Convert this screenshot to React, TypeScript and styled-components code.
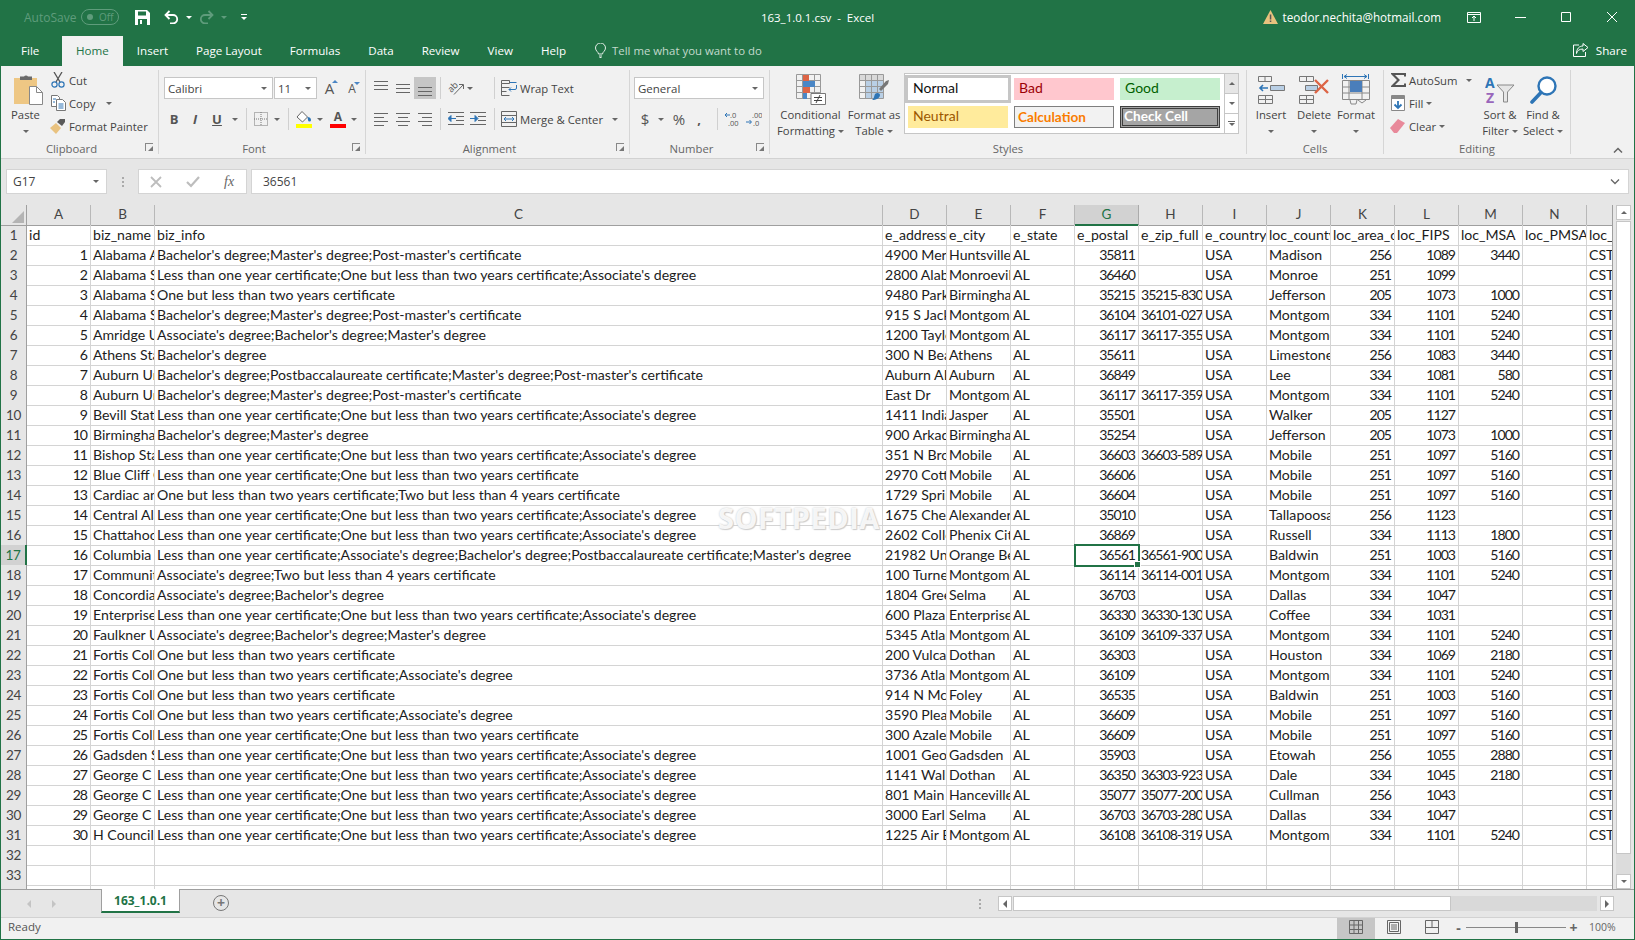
import React from 'react';
import styled, { createGlobalStyle } from 'styled-components';

const UI = '"Open Sans", "Noto Sans", sans-serif';
const CELL = 'Lato, "Open Sans", sans-serif';
const GREEN = '#217346';

const GlobalStyle = createGlobalStyle`
  html, body { margin: 0; padding: 0; overflow: hidden; background: #e6e6e6; }
  * { box-sizing: border-box; }
  svg { display: block; flex: none; }
`;

const L1 = "Less than one year certificate;One but less than two years certificate;Associate's degree";
const L2 = 'Less than one year certificate;One but less than two years certificate';
const O1 = 'One but less than two years certificate';
const O2 = "One but less than two years certificate;Associate's degree";
const B1 = "Bachelor's degree;Master's degree;Post-master's certificate";
const MG = 'Montgomery';

// id | name | info | address | city | postal | zip | county | area | fips | msa
const ROWS = [
  `1|Alabama A&M University|${B1}|4900 Meridian St|Huntsville|35811||Madison|256|1089|3440`,
  `2|Alabama Southern|${L1}|2800 Alabama Hwy|Monroeville|36460||Monroe|251|1099|`,
  `3|Alabama School|${O1}|9480 Parkway E|Birmingham|35215|35215-830|Jefferson|205|1073|1000`,
  `4|Alabama State University|${B1}|915 S Jackson|${MG}|36104|36101-027|${MG}|334|1101|5240`,
  `5|Amridge University|Associate's degree;Bachelor's degree;Master's degree|1200 Taylor Rd|${MG}|36117|36117-355|${MG}|334|1101|5240`,
  `6|Athens State|Bachelor's degree|300 N Beaty|Athens|35611||Limestone|256|1083|3440`,
  `7|Auburn University|Bachelor's degree;Postbaccalaureate certificate;Master's degree;Post-master's certificate|Auburn AL|Auburn|36849||Lee|334|1081|580`,
  `8|Auburn University|${B1}|East Dr|${MG}|36117|36117-359|${MG}|334|1101|5240`,
  `9|Bevill State|${L1}|1411 Indiana|Jasper|35501||Walker|205|1127|`,
  `10|Birmingham|Bachelor's degree;Master's degree|900 Arkadelphia|Birmingham|35254||Jefferson|205|1073|1000`,
  `11|Bishop State|${L1}|351 N Broad|Mobile|36603|36603-589|Mobile|251|1097|5160`,
  `12|Blue Cliff College|${L2}|2970 Cottage|Mobile|36606||Mobile|251|1097|5160`,
  `13|Cardiac and|One but less than two years certificate;Two but less than 4 years certificate|1729 Spring|Mobile|36604||Mobile|251|1097|5160`,
  `14|Central Alabama|${L1}|1675 Cherokee|Alexander City|35010||Tallapoosa|256|1123|`,
  `15|Chattahoochee|${L1}|2602 College|Phenix City|36869||Russell|334|1113|1800`,
  `16|Columbia Southern|Less than one year certificate;Associate's degree;Bachelor's degree;Postbaccalaureate certificate;Master's degree|21982 University|Orange Beach|36561|36561-900|Baldwin|251|1003|5160`,
  `17|Community College|Associate's degree;Two but less than 4 years certificate|100 Turner|${MG}|36114|36114-001|${MG}|334|1101|5240`,
  `18|Concordia College|Associate's degree;Bachelor's degree|1804 Green|Selma|36703||Dallas|334|1047|`,
  `19|Enterprise State|${L1}|600 Plaza Dr|Enterprise|36330|36330-130|Coffee|334|1031|`,
  `20|Faulkner University|Associate's degree;Bachelor's degree;Master's degree|5345 Atlanta|${MG}|36109|36109-337|${MG}|334|1101|5240`,
  `21|Fortis College|${O1}|200 Vulcan|Dothan|36303||Houston|334|1069|2180`,
  `22|Fortis College|${O2}|3736 Atlanta|${MG}|36109||${MG}|334|1101|5240`,
  `23|Fortis College|${O1}|914 N McKenzie|Foley|36535||Baldwin|251|1003|5160`,
  `24|Fortis College|${O2}|3590 Pleasant|Mobile|36609||Mobile|251|1097|5160`,
  `25|Fortis College|${L2}|300 Azalea|Mobile|36609||Mobile|251|1097|5160`,
  `26|Gadsden State|${L1}|1001 George|Gadsden|35903||Etowah|256|1055|2880`,
  `27|George C Wallace|${L1}|1141 Wallace|Dothan|36350|36303-923|Dale|334|1045|2180`,
  `28|George C Wallace|${L1}|801 Main St|Hanceville|35077|35077-200|Cullman|256|1043|`,
  `29|George C Wallace|${L1}|3000 Earl Goodwin|Selma|36703|36703-280|Dallas|334|1047|`,
  `30|H Councill Trenholm|${L1}|1225 Air Base|${MG}|36108|36108-319|${MG}|334|1101|5240`,
].map((r) => r.split('|'));

const LETTERS = 'ABCDEFGHIJKLMNO'.split('');
const HEADERS = ['id', 'biz_name', 'biz_info', 'e_address', 'e_city', 'e_state', 'e_postal', 'e_zip_full', 'e_country', 'loc_county', 'loc_area_code', 'loc_FIPS', 'loc_MSA', 'loc_PMSA', 'loc_timezone'];
const COLUMNS = '26px 64px 64px 728px repeat(12, 64px)';

/* window chrome */
const App1 = styled.div`
  width: 1635px;
  height: 940px;
  display: flex;
  flex-direction: column;
  border: solid ${GREEN};
  border-width: 0 1px 1px 1px;
  background: #e6e6e6;
  overflow: hidden;
  font-family: ${UI};
`;
const TitleBar = styled.div`
  height: 36px;
  margin: 0 -1px;
  padding-bottom: 2px;
  background: ${GREEN};
  color: #fff;
  display: grid;
  grid-template-columns: 1fr auto 1fr;
  align-items: center;
`;
const Qat = styled.div`
  display: flex;
  align-items: center;
  padding-left: 24px;
`;
const AutoSave = styled.span`
  color: #5f9c7c;
  font-size: 12px;
  width: 57px;
`;
const Toggle = styled.span`
  width: 38px;
  height: 16px;
  border: 1px solid #5f9c7c;
  border-radius: 8px;
  color: #5f9c7c;
  font-size: 10px;
  display: flex;
  align-items: center;
  gap: 6px;
  padding-left: 5px;
  margin-right: 16px;
  &::before {
    content: '';
    width: 6px;
    height: 6px;
    border-radius: 50%;
    background: #5f9c7c;
  }
`;
const QatSlot = styled.span<{ $w: number; $ml?: number }>`
  width: ${(p) => p.$w}px;
  margin-left: ${(p) => p.$ml ?? 0}px;
  display: flex;
  flex-direction: column;
  align-items: center;
  gap: 2px;
`;
const QatCaret = styled.i<{ $dim?: boolean }>`
  border-left: 3px solid transparent;
  border-right: 3px solid transparent;
  border-top: 3px solid ${(p) => (p.$dim ? '#5f9c7c' : '#fff')};
`;
const QatBar = styled.i`
  width: 6px;
  height: 1px;
  background: #fff;
`;
const WinTitle = styled.div`
  font-size: 11.5px;
  white-space: pre;
`;
const Account = styled.div`
  display: flex;
  align-items: center;
  justify-content: flex-end;
`;
const Email = styled.span`
  font-size: 11.7px;
  margin: 0 26px 0 5px;
`;
const WinBtn = styled.span<{ $w: number; $ml?: number }>`
  width: ${(p) => p.$w}px;
  margin-left: ${(p) => p.$ml ?? 0}px;
  display: flex;
  justify-content: center;
`;
const TabStrip = styled.div`
  height: 30px;
  margin: 0 -1px;
  background: ${GREEN};
  display: flex;
  align-items: stretch;
`;
const Tab = styled.div<{ $active?: boolean }>`
  padding: 0 14px 2px;
  font-size: 11.6px;
  display: flex;
  align-items: center;
  color: ${(p) => (p.$active ? GREEN : '#fff')};
  background: ${(p) => (p.$active ? '#f1f1f1' : 'transparent')};
`;
const FileTab = styled(Tab)`
  width: 62px;
  padding: 0 0 2px 21px;
`;
const TellMe = styled.div`
  margin-left: 15px;
  padding-bottom: 2px;
  display: flex;
  align-items: center;
  gap: 6px;
  font-size: 11.4px;
  color: #c3dacd;
`;
const Share = styled.div`
  margin-left: auto;
  margin-right: 8px;
  padding-bottom: 2px;
  display: flex;
  align-items: center;
  gap: 7px;
  font-size: 11.6px;
  color: #fff;
`;

/* ribbon */
const Ribbon = styled.div`
  height: 93px;
  background: #f1f1f1;
  border-bottom: 1px solid #d2d2d2;
  display: flex;
  color: #444;
  font-size: 11.3px;
`;
const Group = styled.div<{ $w: number }>`
  position: relative;
  width: ${(p) => p.$w}px;
  flex: none;
  margin-top: 4px;
  height: 84px;
  display: flex;
  flex-direction: column;
  border-right: 1px solid #d6d6d6;
`;
const GroupBody = styled.div`
  flex: 1;
  display: flex;
  min-height: 0;
`;
const GroupName = styled.div<{ $launcher?: boolean }>`
  height: 10px;
  line-height: 10px;
  text-align: center;
  padding-right: ${(p) => (p.$launcher ? 16 : 0)}px;
  color: #666;
`;
const Launcher = styled.span`
  position: absolute;
  right: 5px;
  bottom: 3px;
  width: 8px;
  height: 8px;
  border: solid #888;
  border-width: 1px 0 0 1px;
  &::after {
    content: '';
    position: absolute;
    right: 0;
    bottom: 0;
    border-left: 5px solid transparent;
    border-bottom: 5px solid #777;
  }
`;
const Big = styled.div<{ $w: number; $ml?: number }>`
  width: ${(p) => p.$w}px;
  margin-left: ${(p) => p.$ml ?? 0}px;
  flex: none;
  padding-top: 4px;
  display: flex;
  flex-direction: column;
  align-items: center;
  line-height: 16px;
  white-space: nowrap;
`;
const BigIcon = styled.div`
  height: 31px;
  flex: none;
  display: flex;
  align-items: center;
  justify-content: center;
  margin-bottom: 2px;
`;
const PasteSlot = styled(BigIcon)`
  padding-left: 5px;
`;
const BigLine = styled.div`
  height: 16px;
  flex: none;
  display: flex;
  align-items: center;
  gap: 3px;
`;
const SmallCol = styled.div<{ $w: number; $pl?: number }>`
  width: ${(p) => p.$w}px;
  flex: none;
  padding-left: ${(p) => p.$pl ?? 0}px;
  display: flex;
  flex-direction: column;
  gap: 3px;
`;
const SmallRow = styled.div`
  height: 20px;
  display: flex;
  align-items: center;
  white-space: nowrap;
`;
const SmallIcon = styled.span`
  width: 16px;
  margin-right: 3px;
  display: flex;
  justify-content: center;
`;
const ToolRows = styled.div<{ $pl: number }>`
  padding: 7px 0 0 ${(p) => p.$pl}px;
  display: flex;
  flex-direction: column;
  gap: 9px;
`;
const ToolRow = styled.div`
  height: 22px;
  display: flex;
  align-items: center;
`;
const Tool = styled.span<{ $w: number; $on?: boolean; $ml?: number }>`
  width: ${(p) => p.$w}px;
  height: 22px;
  margin-left: ${(p) => p.$ml ?? 0}px;
  flex: none;
  display: flex;
  align-items: center;
  justify-content: center;
  background: ${(p) => (p.$on ? '#c6c6c6' : 'transparent')};
`;
const Sep = styled.span<{ $l: number; $r: number }>`
  width: 1px;
  height: 22px;
  flex: none;
  background: #d0d0d0;
  margin: 0 ${(p) => p.$r}px 0 ${(p) => p.$l}px;
`;
const Caret = styled.i<{ $ml?: number }>`
  display: inline-block;
  flex: none;
  margin-left: ${(p) => p.$ml ?? 0}px;
  border-left: 3.5px solid transparent;
  border-right: 3.5px solid transparent;
  border-top: 3.5px solid #666;
`;
const Combo = styled.div<{ $w: number; $ml?: number }>`
  width: ${(p) => p.$w}px;
  height: 22px;
  margin-left: ${(p) => p.$ml ?? 0}px;
  flex: none;
  background: #fff;
  border: 1px solid #c6c6c6;
  padding: 0 5px 0 3px;
  display: flex;
  align-items: center;
  justify-content: space-between;
  font-size: 11.5px;
`;
const Letter = styled.span<{ $bold?: boolean; $italic?: boolean; $under?: boolean; $size?: number }>`
  font-family: ${UI};
  font-size: ${(p) => p.$size ?? 13}px;
  font-weight: ${(p) => (p.$bold ? 700 : 400)};
  font-style: ${(p) => (p.$italic ? 'italic' : 'normal')};
  text-decoration: ${(p) => (p.$under ? 'underline' : 'none')};
  color: #555;
`;
const GrowLetter = styled(Letter)`
  position: relative;
  &::after {
    content: '';
    position: absolute;
    right: -4px;
    top: 2px;
    border-left: 3px solid transparent;
    border-right: 3px solid transparent;
  }
`;
const GrowUp = styled(GrowLetter)`
  &::after { border-bottom: 3px solid #4a86c5; }
`;
const GrowDown = styled(GrowLetter)`
  &::after { border-top: 3px solid #4a86c5; }
`;
const ColorStack = styled.span`
  display: flex;
  flex-direction: column;
  align-items: center;
  line-height: 14px;
`;
const Swatch = styled.span<{ $c: string }>`
  width: 16px;
  height: 4px;
  background: ${(p) => p.$c};
`;
const ToolText = styled.span<{ $ml: number }>`
  margin-left: ${(p) => p.$ml}px;
  white-space: nowrap;
`;
const Gallery = styled.div`
  width: 335px;
  height: 61px;
  margin-top: 3px;
  flex: none;
  background: #fff;
  border: 1px solid #c6c6c6;
  display: flex;
`;
const StyleGrid = styled.div`
  padding: 4px 0 0 3px;
  display: grid;
  grid-template-columns: repeat(3, 100px);
  grid-auto-rows: 22px;
  gap: 6px;
`;
const StyleCell = styled.div<{ $bg: string; $fg: string; $border?: string; $bold?: boolean }>`
  background: ${(p) => p.$bg};
  color: ${(p) => p.$fg};
  border: ${(p) => p.$border ?? 'none'};
  font-family: ${CELL};
  font-size: ${(p) => (p.$bold ? 13.6 : 14)}px;
  font-weight: ${(p) => (p.$bold ? 700 : 400)};
  padding-left: ${(p) => (p.$border ? 3 : 5)}px;
  line-height: 20px;
  white-space: nowrap;
`;
const NormalCell = styled(StyleCell)`
  box-shadow: 0 0 0 3px #c6c6c6;
`;
const CheckCell = styled(StyleCell)`
  border: 3px double #3f3f3f;
  padding-left: 1px;
  line-height: 15px;
`;
const GalleryScroll = styled.div`
  margin-left: auto;
  width: 14px;
  display: flex;
  flex-direction: column;
  border-left: 1px solid #c6c6c6;
`;
const GalleryBtn = styled.span<{ $off?: boolean }>`
  flex: 1;
  background: ${(p) => (p.$off ? '#e6e6e6' : '#fff')};
  border-bottom: 1px solid #c6c6c6;
  display: flex;
  flex-direction: column;
  align-items: center;
  justify-content: center;
  gap: 1px;
  &:last-child { border-bottom: none; }
`;
const MoreBar = styled.span`
  width: 7px;
  height: 1px;
  background: #666;
`;
const UpCaret = styled(Caret)`
  transform: rotate(180deg);
`;
const Collapse = styled.div`
  margin-left: auto;
  padding: 81px 11px 0 0;
`;

/* formula bar */
const FormulaBand = styled.div`
  height: 46px;
  padding: 10px 5px 0 5px;
  display: flex;
  flex: none;
`;
const Field = styled.div<{ $w?: number }>`
  height: 25px;
  background: #fff;
  border: 1px solid #d4d4d4;
  display: flex;
  align-items: center;
  font-size: 12px;
  color: #444;
  flex: ${(p) => (p.$w ? `0 0 ${p.$w}px` : 1)};
`;
const NameBox = styled(Field)`
  padding: 0 7px 0 6px;
  justify-content: space-between;
`;
const Dots = styled.div`
  width: 31px;
  display: flex;
  flex-direction: column;
  align-items: center;
  justify-content: center;
  gap: 2px;
  height: 25px;
  &::before, &::after, span {
    content: '';
    width: 2px;
    height: 2px;
    background: #aaa;
  }
`;
const FxBox = styled(Field)`
  padding-left: 11px;
  gap: 24px;
  margin-right: 4px;
`;
const FormulaInput = styled(Field)`
  padding: 0 8px 0 11px;
  justify-content: space-between;
`;
const FxLabel = styled.span`
  font-family: "Liberation Serif", serif;
  font-style: italic;
  font-size: 14px;
  color: #666;
`;

/* worksheet */
const SheetArea = styled.div`
  height: 684px;
  flex: none;
  display: flex;
  position: relative;
`;
const Grid = styled.div`
  width: 1612px;
  flex: none;
  overflow: hidden;
  background: #fff;
  border-right: 1px solid #9f9f9f;
`;
const GridRow = styled.div<{ $h?: number }>`
  display: grid;
  grid-template-columns: ${COLUMNS};
  height: ${(p) => p.$h ?? 20}px;
`;
const Corner = styled.div`
  background: #e6e6e6;
  border: solid #9f9f9f;
  border-width: 0 1px 1px 0;
  position: relative;
  &::after {
    content: '';
    position: absolute;
    right: 2px;
    bottom: 2px;
    border-left: 12px solid transparent;
    border-bottom: 12px solid #b4b4b4;
  }
`;
const ColHead = styled.div<{ $sel?: boolean }>`
  background: ${(p) => (p.$sel ? '#d2d2d2' : '#e6e6e6')};
  color: ${(p) => (p.$sel ? GREEN : '#444')};
  border-right: 1px solid ${(p) => (p.$sel ? '#ababab' : '#b8b8b8')};
  border-bottom: ${(p) => (p.$sel ? `2px solid ${GREEN}` : '1px solid #9f9f9f')};
  font-family: ${CELL};
  font-size: 13.5px;
  text-align: center;
  line-height: 19px;
`;
const RowHead = styled.div<{ $sel?: boolean }>`
  background: ${(p) => (p.$sel ? '#d2d2d2' : '#e6e6e6')};
  color: ${(p) => (p.$sel ? GREEN : '#444')};
  border-right: ${(p) => (p.$sel ? `2px solid ${GREEN}` : '1px solid #9f9f9f')};
  border-bottom: 1px solid #c8c8c8;
  font-family: ${CELL};
  font-size: 13.5px;
  letter-spacing: -0.4px;
  text-align: center;
  line-height: 20px;
`;
const Cell = styled.div<{ $num?: boolean; $active?: boolean; $digits?: boolean }>`
  position: relative;
  border: solid #d4d4d4;
  border-width: 0 1px 1px 0;
  padding: 0 3px 0 2px;
  font-family: ${CELL};
  font-size: 14.1px;
  letter-spacing: ${(p) => (p.$digits ? '-1px' : 'normal')};
  line-height: 20px;
  color: #1c1c1c;
  white-space: nowrap;
  overflow: ${(p) => (p.$active ? 'visible' : 'hidden')};
  text-align: ${(p) => (p.$num ? 'right' : 'left')};
  ${(p) =>
    p.$active &&
    `
    outline: 2px solid ${GREEN};
    outline-offset: -1px;
    z-index: 2;
    &::after {
      content: '';
      position: absolute;
      right: -3px;
      bottom: -3px;
      width: 5px;
      height: 5px;
      background: ${GREEN};
      border: 1px solid #fff;
    }
  `}
`;
const Watermark = styled.div`
  position: absolute;
  left: 717px;
  top: 293px;
  font: 700 29px ${UI};
  letter-spacing: 0.5px;
  color: rgba(255, 255, 255, 0.85);
  text-shadow: 0 0 2px #c4c4c4, 1px 1px 1px #d0d0d0;
  pointer-events: none;
  z-index: 1;
`;
const VScroll = styled.div`
  flex: 1;
  padding: 0 3px 0 3px;
  display: flex;
  flex-direction: column;
`;
const ScrollBtn = styled.div`
  height: 15px;
  flex: none;
  background: #fff;
  border: 1px solid #c6c6c6;
  display: flex;
  align-items: center;
  justify-content: center;
`;
const VThumb = styled.div`
  height: 633px;
  flex: none;
  background: #fff;
  border: 1px solid #c6c6c6;
  margin-top: 1px;
`;
const VTrack = styled.div`
  flex: 1;
  background: #dcdcdc;
`;

/* sheet tabs + status */
const TabBar = styled.div`
  height: 28px;
  flex: none;
  border-top: 1px solid #9f9f9f;
  display: flex;
  align-items: flex-start;
`;
const SheetNav = styled.div`
  width: 100px;
  height: 27px;
  display: flex;
  align-items: center;
  padding-left: 26px;
  gap: 21px;
`;
const NavArrow = styled.i<{ $left?: boolean }>`
  border-top: 4px solid transparent;
  border-bottom: 4px solid transparent;
  ${(p) => (p.$left ? 'border-right: 4px solid #c4c4c4;' : 'border-left: 4px solid #c4c4c4;')}
`;
const SheetTab = styled.div`
  width: 79px;
  height: 24px;
  background: #fff;
  border: solid #9f9f9f;
  border-width: 0 1px;
  border-bottom: 2px solid ${GREEN};
  margin-top: -1px;
  color: ${GREEN};
  font-weight: 700;
  font-size: 12px;
  text-align: center;
  line-height: 24px;
`;
const AddSheet = styled.div`
  margin: 5px 0 0 33px;
  width: 16px;
  height: 16px;
  border: 1.5px solid #777;
  border-radius: 50%;
  display: flex;
  align-items: center;
  justify-content: center;
  color: #777;
  font-size: 14px;
  line-height: 1;
  &::before { content: '+'; font-weight: 700; }
`;
const Splitter = styled(Dots)`
  width: 14px;
  height: 27px;
  margin-left: 744px;
`;
const HScroll = styled.div`
  flex: 1;
  display: flex;
  margin: 6px 20px 0 11px;
  height: 15px;
`;
const HBtn = styled.div`
  width: 14px;
  background: #fff;
  border: 1px solid #c6c6c6;
  display: flex;
  align-items: center;
  justify-content: center;
`;
const HThumb = styled.div`
  width: 438px;
  background: #fff;
  border: 1px solid #c6c6c6;
  margin-left: 1px;
`;
const HTrack = styled.div`
  flex: 1;
  background: #d9d9d9;
  margin-right: 3px;
`;
const DarkArrow = styled.i<{ $left?: boolean }>`
  border-top: 4px solid transparent;
  border-bottom: 4px solid transparent;
  ${(p) => (p.$left ? 'border-right: 4px solid #666;' : 'border-left: 4px solid #666;')}
`;
const StatusBar = styled.div`
  height: 22px;
  flex: none;
  background: #f1f1f1;
  border-top: 1px solid #d2d2d2;
  display: flex;
  align-items: stretch;
  padding-left: 7px;
  font-size: 11.5px;
  color: #555;
`;
const Ready = styled.span`
  line-height: 17px;
`;
const ViewBtn = styled.span<{ $on?: boolean }>`
  width: 38px;
  height: 21px;
  padding-bottom: 3px;
  display: flex;
  align-items: center;
  justify-content: center;
  background: ${(p) => (p.$on ? '#c6c6c6' : 'transparent')};
`;
const Views = styled.div`
  margin-left: auto;
  display: flex;
`;
const Zoomer = styled.div`
  display: flex;
  align-items: center;
  padding-bottom: 3px;
  margin: 0 19px 0 3px;
  gap: 3px;
`;
const ZoomSign = styled.span`
  font-weight: 700;
  font-size: 14px;
  width: 9px;
  text-align: center;
  color: #666;
`;
const Slider = styled.span`
  width: 100px;
  height: 1px;
  background: #888;
  position: relative;
  &::after {
    content: '';
    position: absolute;
    left: 49px;
    top: -5px;
    width: 3px;
    height: 11px;
    background: #666;
  }
`;
const Percent = styled.span`
  width: 26px;
  margin-left: 8px;
  font-size: 10.5px;
  color: #666;
`;

/* icons */
const AlignIcon = ({ y }: { y: number }) => (
  <svg width="14" height="16" viewBox="0 0 14 16" stroke="#666" strokeWidth="1">
    {[0, 1, 2].map((i) => <path key={i} d={`M0 ${y + i * 4 + 0.5}h14`} />)}
  </svg>
);
const HAlignIcon = ({ mode }: { mode: 'l' | 'c' | 'r' }) => {
  const widths = [14, 10, 14, 10];
  return (
    <svg width="14" height="14" viewBox="0 0 14 14" stroke="#666">
      {widths.map((w, i) => {
        const x = mode === 'l' ? 0 : mode === 'c' ? (14 - w) / 2 : 14 - w;
        return <path key={i} d={`M${x} ${i * 4 + 1.5}h${w}`} />;
      })}
    </svg>
  );
};
const IndentIcon = ({ flip }: { flip?: boolean }) => (
  <svg width="16" height="14" viewBox="0 0 16 14" fill="none">
    <path d="M0 .5h16M8 4.5h8M8 8.5h8M0 12.5h16" stroke="#666" />
    {flip ? (
      <path d="M0 6.5h5M5 3.5l3 3-3 3z" stroke="#2e75b6" fill="#2e75b6" />
    ) : (
      <path d="M3 6.5h5M3 3.5l-3 3 3 3z" stroke="#2e75b6" fill="#2e75b6" />
    )}
  </svg>
);

const Icons = {
  Save: () => (
    <svg width="15" height="15" viewBox="0 0 15 15">
      <path d="M0 0h12l3 3v12H0z" fill="#fff" />
      <path d="M3 1.5h8v4H3zM3 9h9v6H3z" fill={GREEN} />
      <path d="M5 10h2v4H5z" fill="#fff" />
    </svg>
  ),
  Undo: ({ c = '#fff' }: { c?: string }) => (
    <svg width="15" height="14" viewBox="0 0 15 14" fill="none" stroke={c} strokeWidth="1.8">
      <path d="M5.5 1L1.5 5l4 4M1.5 5H9a4.2 4.2 0 0 1 0 8.4H6" />
    </svg>
  ),
  Redo: () => (
    <svg width="15" height="14" viewBox="0 0 15 14" fill="none" stroke="#5f9c7c" strokeWidth="1.8">
      <path d="M9.5 1l4 4-4 4M13.5 5H6a4.2 4.2 0 0 0 0 8.4h3" />
    </svg>
  ),
  Warn: () => (
    <svg width="15" height="14" viewBox="0 0 15 14">
      <path d="M7.5 0L15 14H0z" fill="#e8c27e" />
      <path d="M6.8 4.5h1.5v5H6.8zM6.8 10.5h1.5v1.6H6.8z" fill="#555" />
    </svg>
  ),
  Display: () => (
    <svg width="14" height="11" viewBox="0 0 14 11" fill="none" stroke="#fff">
      <path d="M.5.5h13v10H.5zM.5 2.5h13M7 9V4.5M5 6l2-2 2 2" />
    </svg>
  ),
  Min: () => (
    <svg width="11" height="10" viewBox="0 0 11 10" stroke="#fff"><path d="M0 5.5h11" /></svg>
  ),
  Max: () => (
    <svg width="10" height="10" viewBox="0 0 10 10" fill="none" stroke="#fff"><path d="M.5.5h9v9h-9z" /></svg>
  ),
  Close: () => (
    <svg width="10" height="10" viewBox="0 0 10 10" stroke="#fff"><path d="M0 0l10 10M10 0L0 10" /></svg>
  ),
  Bulb: () => (
    <svg width="11" height="15" viewBox="0 0 11 15" fill="none" stroke="#e4eee8">
      <path d="M3.5 11c0-2-3-3-3-6a5 5 0 0 1 10 0c0 3-3 4-3 6zM4 13h3M4.5 14.5h2" />
    </svg>
  ),
  Share: () => (
    <svg width="16" height="14" viewBox="0 0 16 14" fill="none" stroke="#fff">
      <path d="M10 .5l5 4-5 4V6C6 6 4 8 3.5 10.5 3.5 6 6 3 10 3zM6 2H.5v11.5h12V9" />
    </svg>
  ),
  Paste: () => (
    <svg width="29" height="31" viewBox="0 0 29 31">
      <path d="M0 4h23v26H0z" fill="#eec784" />
      <path d="M6 2.5h4a2.5 2.5 0 0 1 4 0h4V6H6z" fill="#6b6b6b" />
      <path d="M15.5 12.5h7l6 6v12h-13z" fill="#fff" stroke="#888" />
      <path d="M22.5 12.5v6h6" fill="none" stroke="#888" />
    </svg>
  ),
  Cut: () => (
    <svg width="14" height="16" viewBox="0 0 14 16" fill="none">
      <path d="M3 0l6 10M11 0L5 10" stroke="#555" strokeWidth="1.3" />
      <circle cx="3.5" cy="12.5" r="2.6" stroke="#2e75b6" strokeWidth="1.2" />
      <circle cx="10.5" cy="12.5" r="2.6" stroke="#2e75b6" strokeWidth="1.2" />
    </svg>
  ),
  Copy: () => (
    <svg width="15" height="16" viewBox="0 0 15 16" fill="#fff">
      <path d="M.5.5h6l2 2v9H.5z" stroke="#777" />
      <path d="M5.5 4.5h6l3 3v8h-9z" stroke="#777" />
      <path d="M2 4h3M2 7h2M7.5 9h5M7.5 11h5M7.5 13h5" stroke="#2e75b6" fill="none" />
    </svg>
  ),
  Painter: () => (
    <svg width="16" height="16" viewBox="0 0 16 16">
      <path d="M0 10l6-5 5 5-5 6z" fill="#e9c27f" />
      <path d="M7 4l3-3 5 0 0 3-3 4z" fill="#5a5a5a" />
    </svg>
  ),
  Borders: () => (
    <svg width="14" height="14" viewBox="0 0 14 14" fill="none" stroke="#777" strokeDasharray="1 1">
      <path d="M.5.5h13v13H.5zM7 0v14M0 7h14" />
    </svg>
  ),
  Bucket: () => (
    <svg width="16" height="13" viewBox="0 0 16 13" fill="#fff" stroke="#666">
      <path d="M6 .5l5.5 5.5-5 5L1 6z" />
      <path d="M11.5 6c2 0 3.5 1 3.5 3a1.5 1.5 0 0 1-3 0z" fill="#2e75b6" stroke="none" />
    </svg>
  ),
  Orient: () => (
    <svg width="16" height="16" viewBox="0 0 16 16" fill="none">
      <text x="0" y="11" fontSize="9" fontFamily="Open Sans" fill="#555" transform="rotate(-45 4 8)">ab</text>
      <path d="M6 14.5L15 5M11 4.5h4.5v4.5" stroke="#666" />
    </svg>
  ),
  Wrap: () => (
    <svg width="16" height="16" viewBox="0 0 16 16" fill="none" stroke="#666">
      <path d="M.5.5h8v3h-8zM.5 3.5v12h8M.5 7.5h8M.5 11.5h5" />
      <path d="M9 2.5h6.5M15.5 5v3a1.5 1.5 0 0 1-1.5 1.5H8M10 7.5l-2 2 2 2" stroke="#2e75b6" />
    </svg>
  ),
  Merge: () => (
    <svg width="16" height="16" viewBox="0 0 16 16" fill="none" stroke="#666">
      <path d="M.5.5h15v15H.5zM.5 4.5h15M.5 11.5h15" />
      <path d="M3 8h10M5 6L3 8l2 2M11 6l2 2-2 2" stroke="#2e75b6" />
    </svg>
  ),
  IncDec: ({ dec }: { dec?: boolean }) => (
    <svg width="16" height="16" viewBox="0 0 16 16">
      <text x="6" y="6.5" fontSize="7.5" fontFamily="Open Sans" fill="#555">{dec ? '.00' : '.0'}</text>
      <text x={dec ? 7 : 4} y="14.5" fontSize="7.5" fontFamily="Open Sans" fill="#555">{dec ? '.0' : '.00'}</text>
      <path d={dec ? 'M0 11h5M3.5 9l2 2-2 2' : 'M1 4h5M3 2L1 4l2 2'} stroke="#2e75b6" fill="none" />
    </svg>
  ),
  CondFormat: () => (
    <svg width="30" height="31" viewBox="0 0 30 31" fill="none">
      <path d="M.5.5h24v24H.5zM.5 6.5h24M.5 12.5h24M.5 18.5h24M6.5 0v25M18.5 0v25" stroke="#999" />
      <path d="M7 1h6v6H7zM7 13h7v6H7z" fill="#dd6445" />
      <path d="M7 7h12v6H7zM7 19h4v6H7z" fill="#4a86c5" />
      <path d="M15 19.5h14.5v11H15z" fill="#fff" stroke="#777" />
      <path d="M18 23.5h8M18 26.5h8M20 29l4-8" stroke="#444" />
    </svg>
  ),
  TableFormat: () => (
    <svg width="30" height="31" viewBox="0 0 30 31" fill="none">
      <path d="M.5.5h24v24H.5z" stroke="#999" />
      <path d="M1 1h23v5H1z" fill="#d9d9d9" />
      <path d="M7 7h17v17H7z" fill="#b9cfe5" />
      <path d="M.5 6.5h24M.5 12.5h24M.5 18.5h24M6.5 0v25M12.5 0v25M18.5 0v25" stroke="#999" />
      <path d="M20 15l7-8 3-1-1 4-7 7z" fill="#777" />
      <path d="M16 20c2-2 5-1 5 1 0 3-4 5-8 5 2-1 2-4 3-6z" fill="#2e75b6" />
    </svg>
  ),
  Insert: () => (
    <svg width="27" height="28" viewBox="0 0 27 28" fill="none">
      <path d="M.5.5h13v5H.5zM7 0v6M.5 19.5h14v8H.5zM7.5 19v9M0 23.5h14" stroke="#777" />
      <path d="M12.5 9.5h14v5h-14z" fill="#b9cfe5" stroke="#777" />
      <path d="M10 12H2M5 9l-3 3 3 3" stroke="#2e75b6" strokeWidth="1.6" />
    </svg>
  ),
  Delete: () => (
    <svg width="30" height="28" viewBox="0 0 30 28" fill="none">
      <path d="M.5.5h14v5H.5zM7.5 0v6M.5 19.5h14v8H.5zM7.5 19v9M0 23.5h14" stroke="#777" />
      <path d="M6.5 9.5h12v5h-12z" fill="#b9cfe5" stroke="#777" />
      <path d="M16 4l13 13M29 4L16 17" stroke="#dd6445" strokeWidth="2.4" />
    </svg>
  ),
  Format: () => (
    <svg width="28" height="31" viewBox="0 0 28 31" fill="none">
      <path d="M.5 0v5M26.5 0v5M2 2.5h23M5 .5L2 2.5l3 2M22 .5l3 2-3 2" stroke="#2e75b6" />
      <path d="M.5 6.5h27v19H.5zM.5 13h27M.5 19h27M7 6v20M20 6v20" stroke="#888" />
      <path d="M8 7h12v11H8z" fill="#4a7ebb" />
      <path d="M8 26l1 4h5l1-4M16 26l4 3 4-3" stroke="#888" />
    </svg>
  ),
  Sigma: () => (
    <svg width="15" height="14" viewBox="0 0 15 14">
      <path d="M0 0h15v3.5h-2V2H4l5 5-5 5h9v-1.5h2V14H0v-1l6-6-6-6z" fill="#555" />
    </svg>
  ),
  Fill: () => (
    <svg width="14" height="16" viewBox="0 0 14 16" fill="#fff">
      <path d="M.5.5h13v15H.5z" stroke="#888" />
      <path d="M1 1h12v3H1z" fill="#888" />
      <path d="M7 6v7M3.5 9.5L7 13l3.5-3.5" stroke="#2e75b6" strokeWidth="1.8" fill="none" />
    </svg>
  ),
  Clear: () => (
    <svg width="16" height="14" viewBox="0 0 16 14">
      <path d="M0 9l8-9 7 4-8 10H4z" fill="#e8899a" />
    </svg>
  ),
  Sort: () => (
    <svg width="30" height="28" viewBox="0 0 30 28">
      <text x="0" y="12" fontFamily="Open Sans" fontWeight="700" fontSize="14" fill="#2e75b6">A</text>
      <text x="1" y="27" fontFamily="Open Sans" fontWeight="700" fontSize="14" fill="#9966bb">Z</text>
      <path d="M12 9h17l-6.5 7v10h-4V16z" fill="#e6e6e6" stroke="#888" />
    </svg>
  ),
  Find: () => (
    <svg width="27" height="28" viewBox="0 0 27 28" fill="none" stroke="#2e75b6">
      <circle cx="17" cy="10" r="8.5" strokeWidth="2.4" fill="#fff" />
      <path d="M11 16.5L2 26" strokeWidth="3.6" strokeLinecap="round" />
    </svg>
  ),
  Chevron: () => (
    <svg width="10" height="6" viewBox="0 0 10 6" fill="none" stroke="#666" strokeWidth="1.5">
      <path d="M1 5.5l4-4 4 4" />
    </svg>
  ),
  ChevronDown: () => (
    <svg width="10" height="6" viewBox="0 0 10 6" fill="none" stroke="#666" strokeWidth="1.3">
      <path d="M1 .5l4 4 4-4" />
    </svg>
  ),
  X: () => (
    <svg width="12" height="12" viewBox="0 0 12 12" stroke="#bdbdbd" strokeWidth="1.8"><path d="M1 1l10 10M11 1L1 11" /></svg>
  ),
  Check: () => (
    <svg width="14" height="12" viewBox="0 0 14 12" fill="none" stroke="#bdbdbd" strokeWidth="2.2"><path d="M1 6l4 4 8-9" /></svg>
  ),
  NormalView: () => (
    <svg width="14" height="14" viewBox="0 0 14 14" fill="none" stroke="#666"><path d="M.5.5h13v13H.5zM.5 5h13M.5 9.5h13M5 0v14M9.5 0v14" /></svg>
  ),
  LayoutView: () => (
    <svg width="14" height="14" viewBox="0 0 14 14" fill="none" stroke="#666"><path d="M.5.5h13v13H.5zM2.5 2.5h9v9h-9zM4 5h6M4 7h6M4 9h6" /></svg>
  ),
  BreakView: () => (
    <svg width="14" height="14" viewBox="0 0 14 14" fill="none" stroke="#666"><path d="M.5.5h13v13H.5zM7 0v7M.5 7.5h13" /></svg>
  ),
};

const DataRow = ({ n, r }: { n: number; r: string[] }) => {
  const selected = n === 17;
  return (
    <GridRow>
      <RowHead $sel={selected}>{n}</RowHead>
      <Cell $num $digits>{r[0]}</Cell>
      <Cell>{r[1]}</Cell>
      <Cell>{r[2]}</Cell>
      <Cell>{r[3]}</Cell>
      <Cell>{r[4]}</Cell>
      <Cell>AL</Cell>
      <Cell $num $digits $active={selected}>{r[5]}</Cell>
      <Cell $digits>{r[6]}</Cell>
      <Cell>USA</Cell>
      <Cell>{r[7]}</Cell>
      <Cell $num $digits>{r[8]}</Cell>
      <Cell $num $digits>{r[9]}</Cell>
      <Cell $num $digits>{r[10]}</Cell>
      <Cell />
      <Cell>CST</Cell>
    </GridRow>
  );
};

const EmptyRow = ({ n, h }: { n: number; h?: number }) => (
  <GridRow $h={h}>
    <RowHead>{n}</RowHead>
    {LETTERS.map((l) => <Cell key={l} />)}
  </GridRow>
);

export default function App() {
  return (
    <App1>
      <GlobalStyle />
      <TitleBar>
        <Qat>
          <AutoSave>AutoSave</AutoSave>
          <Toggle>Off</Toggle>
          <QatSlot $w={14}><Icons.Save /></QatSlot>
          <QatSlot $w={15} $ml={15}><Icons.Undo /></QatSlot>
          <QatSlot $w={20}><QatCaret /></QatSlot>
          <QatSlot $w={15}><Icons.Redo /></QatSlot>
          <QatSlot $w={20}><QatCaret $dim /></QatSlot>
          <QatSlot $w={20}><QatBar /><QatCaret /></QatSlot>
        </Qat>
        <WinTitle>163_1.0.1.csv  -  Excel</WinTitle>
        <Account>
          <Icons.Warn />
          <Email>teodor.nechita@hotmail.com</Email>
          <WinBtn $w={14}><Icons.Display /></WinBtn>
          <WinBtn $w={46} $ml={16}><Icons.Min /></WinBtn>
          <WinBtn $w={46}><Icons.Max /></WinBtn>
          <WinBtn $w={46}><Icons.Close /></WinBtn>
        </Account>
      </TitleBar>
      <TabStrip>
        <FileTab>File</FileTab>
        <Tab $active>Home</Tab>
        <Tab>Insert</Tab>
        <Tab>Page Layout</Tab>
        <Tab>Formulas</Tab>
        <Tab>Data</Tab>
        <Tab>Review</Tab>
        <Tab>View</Tab>
        <Tab>Help</Tab>
        <TellMe><Icons.Bulb />Tell me what you want to do</TellMe>
        <Share><Icons.Share />Share</Share>
      </TabStrip>

      <Ribbon>
        <Group $w={158}>
          <GroupBody>
            <Big $w={49}>
              <PasteSlot><Icons.Paste /></PasteSlot>
              <BigLine>Paste</BigLine>
              <BigLine><Caret /></BigLine>
            </Big>
            <SmallCol $w={100}>
              <SmallRow><SmallIcon><Icons.Cut /></SmallIcon>Cut</SmallRow>
              <SmallRow><SmallIcon><Icons.Copy /></SmallIcon>Copy<Caret $ml={11} /></SmallRow>
              <SmallRow><SmallIcon><Icons.Painter /></SmallIcon>Format Painter</SmallRow>
            </SmallCol>
          </GroupBody>
          <GroupName $launcher>Clipboard</GroupName>
          <Launcher />
        </Group>

        <Group $w={207}>
          <GroupBody>
            <ToolRows $pl={5}>
              <ToolRow>
                <Combo $w={109}>Calibri<Caret /></Combo>
                <Combo $w={43} $ml={1}>11<Caret /></Combo>
                <Tool $w={13} $ml={6}><GrowUp $size={15}>A</GrowUp></Tool>
                <Tool $w={12} $ml={10}><GrowDown $size={12}>A</GrowDown></Tool>
              </ToolRow>
              <ToolRow>
                <Tool $w={20}><Letter $bold>B</Letter></Tool>
                <Tool $w={22}><Letter $italic $bold>I</Letter></Tool>
                <Tool $w={22}><Letter $bold $under>U</Letter></Tool>
                <Tool $w={14}><Caret /></Tool>
                <Sep $l={4} $r={7} />
                <Tool $w={14}><Icons.Borders /></Tool>
                <Tool $w={18}><Caret /></Tool>
                <Sep $l={2} $r={7} />
                <Tool $w={16}><ColorStack><Icons.Bucket /><Swatch $c="#ffff00" /></ColorStack></Tool>
                <Tool $w={16}><Caret /></Tool>
                <Tool $w={16} $ml={2}><ColorStack><Letter $bold $size={12}>A</Letter><Swatch $c="#ff0000" /></ColorStack></Tool>
                <Tool $w={16}><Caret /></Tool>
              </ToolRow>
            </ToolRows>
          </GroupBody>
          <GroupName $launcher>Font</GroupName>
          <Launcher />
        </Group>

        <Group $w={264}>
          <GroupBody>
            <ToolRows $pl={4}>
              <ToolRow>
                <Tool $w={22}><AlignIcon y={1} /></Tool>
                <Tool $w={22}><AlignIcon y={4} /></Tool>
                <Tool $w={22} $on><AlignIcon y={7} /></Tool>
                <Sep $l={4} $r={7} />
                <Tool $w={16}><Icons.Orient /></Tool>
                <Tool $w={12}><Caret /></Tool>
                <Sep $l={18} $r={6} />
                <Tool $w={16}><Icons.Wrap /></Tool>
                <ToolText $ml={3}>Wrap Text</ToolText>
              </ToolRow>
              <ToolRow>
                <Tool $w={22}><HAlignIcon mode="l" /></Tool>
                <Tool $w={22}><HAlignIcon mode="c" /></Tool>
                <Tool $w={22}><HAlignIcon mode="r" /></Tool>
                <Sep $l={4} $r={7} />
                <Tool $w={16}><IndentIcon /></Tool>
                <Tool $w={16} $ml={6}><IndentIcon flip /></Tool>
                <Sep $l={8} $r={6} />
                <Tool $w={16}><Icons.Merge /></Tool>
                <ToolText $ml={3}>Merge &amp; Center</ToolText>
                <Caret $ml={9} />
              </ToolRow>
            </ToolRows>
          </GroupBody>
          <GroupName $launcher>Alignment</GroupName>
          <Launcher />
        </Group>

        <Group $w={140}>
          <GroupBody>
            <ToolRows $pl={4}>
              <ToolRow><Combo $w={130}>General<Caret /></Combo></ToolRow>
              <ToolRow>
                <Tool $w={22}><Letter $size={15}>$</Letter></Tool>
                <Tool $w={10}><Caret /></Tool>
                <Tool $w={26}><Letter $size={15}>%</Letter></Tool>
                <Tool $w={14}><Letter $bold $size={13}>,</Letter></Tool>
                <Sep $l={11} $r={6} />
                <Tool $w={16}><Icons.IncDec /></Tool>
                <Tool $w={16} $ml={6}><Icons.IncDec dec /></Tool>
              </ToolRow>
            </ToolRows>
          </GroupBody>
          <GroupName $launcher>Number</GroupName>
          <Launcher />
        </Group>

        <Group $w={477}>
          <GroupBody>
            <Big $w={67} $ml={7}>
              <BigIcon><Icons.CondFormat /></BigIcon>
              <BigLine>Conditional</BigLine>
              <BigLine>Formatting<Caret /></BigLine>
            </Big>
            <Big $w={60}>
              <BigIcon><Icons.TableFormat /></BigIcon>
              <BigLine>Format as</BigLine>
              <BigLine>Table<Caret /></BigLine>
            </Big>
            <Gallery>
              <StyleGrid>
                <NormalCell $bg="#fff" $fg="#111">Normal</NormalCell>
                <StyleCell $bg="#ffc7ce" $fg="#9c0006">Bad</StyleCell>
                <StyleCell $bg="#c6efce" $fg="#006100">Good</StyleCell>
                <StyleCell $bg="#ffeb9c" $fg="#9c5700">Neutral</StyleCell>
                <StyleCell $bg="#f2f2f2" $fg="#fa7d00" $bold $border="1px solid #7f7f7f">Calculation</StyleCell>
                <CheckCell $bg="#a5a5a5" $fg="#fff" $bold>Check Cell</CheckCell>
              </StyleGrid>
              <GalleryScroll>
                <GalleryBtn $off><UpCaret /></GalleryBtn>
                <GalleryBtn><Caret /></GalleryBtn>
                <GalleryBtn><MoreBar /><Caret /></GalleryBtn>
              </GalleryScroll>
            </Gallery>
          </GroupBody>
          <GroupName>Styles</GroupName>
        </Group>

        <Group $w={137}>
          <GroupBody>
            <Big $w={48}>
              <BigIcon><Icons.Insert /></BigIcon>
              <BigLine>Insert</BigLine>
              <BigLine><Caret /></BigLine>
            </Big>
            <Big $w={38}>
              <BigIcon><Icons.Delete /></BigIcon>
              <BigLine>Delete</BigLine>
              <BigLine><Caret /></BigLine>
            </Big>
            <Big $w={46}>
              <BigIcon><Icons.Format /></BigIcon>
              <BigLine>Format</BigLine>
              <BigLine><Caret /></BigLine>
            </Big>
          </GroupBody>
          <GroupName>Cells</GroupName>
        </Group>

        <Group $w={187}>
          <GroupBody>
            <SmallCol $w={94} $pl={6}>
              <SmallRow><SmallIcon><Icons.Sigma /></SmallIcon>AutoSum<Caret $ml={9} /></SmallRow>
              <SmallRow><SmallIcon><Icons.Fill /></SmallIcon>Fill<Caret $ml={3} /></SmallRow>
              <SmallRow><SmallIcon><Icons.Clear /></SmallIcon>Clear<Caret $ml={3} /></SmallRow>
            </SmallCol>
            <Big $w={44}>
              <BigIcon><Icons.Sort /></BigIcon>
              <BigLine>Sort &amp;</BigLine>
              <BigLine>Filter<Caret /></BigLine>
            </Big>
            <Big $w={42}>
              <BigIcon><Icons.Find /></BigIcon>
              <BigLine>Find &amp;</BigLine>
              <BigLine>Select<Caret /></BigLine>
            </Big>
          </GroupBody>
          <GroupName>Editing</GroupName>
        </Group>
        <Collapse><Icons.Chevron /></Collapse>
      </Ribbon>

      <FormulaBand>
        <NameBox $w={101}>G17<Caret /></NameBox>
        <Dots><span /></Dots>
        <FxBox $w={109}><Icons.X /><Icons.Check /><FxLabel>fx</FxLabel></FxBox>
        <FormulaInput>36561<Icons.ChevronDown /></FormulaInput>
      </FormulaBand>

      <SheetArea>
        <Grid>
          <GridRow>
            <Corner />
            {LETTERS.map((l) => <ColHead key={l} $sel={l === 'G'}>{l}</ColHead>)}
          </GridRow>
          <GridRow>
            <RowHead>1</RowHead>
            {HEADERS.map((h) => <Cell key={h}>{h}</Cell>)}
          </GridRow>
          {ROWS.map((r, i) => <DataRow key={r[0]} n={i + 2} r={r} />)}
          <EmptyRow n={32} />
          <EmptyRow n={33} />
          <EmptyRow n={34} h={5} />
        </Grid>
        <Watermark>SOFTPEDIA</Watermark>
        <VScroll>
          <ScrollBtn><UpCaret /></ScrollBtn>
          <VThumb />
          <VTrack />
          <ScrollBtn><Caret /></ScrollBtn>
        </VScroll>
      </SheetArea>

      <TabBar>
        <SheetNav><NavArrow $left /><NavArrow /></SheetNav>
        <SheetTab>163_1.0.1</SheetTab>
        <AddSheet />
        <Splitter><span /></Splitter>
        <HScroll>
          <HBtn><DarkArrow $left /></HBtn>
          <HThumb />
          <HTrack />
          <HBtn><DarkArrow /></HBtn>
        </HScroll>
      </TabBar>

      <StatusBar>
        <Ready>Ready</Ready>
        <Views>
          <ViewBtn $on><Icons.NormalView /></ViewBtn>
          <ViewBtn><Icons.LayoutView /></ViewBtn>
          <ViewBtn><Icons.BreakView /></ViewBtn>
        </Views>
        <Zoomer>
          <ZoomSign>-</ZoomSign>
          <Slider />
          <ZoomSign>+</ZoomSign>
          <Percent>100%</Percent>
        </Zoomer>
      </StatusBar>
    </App1>
  );
}
